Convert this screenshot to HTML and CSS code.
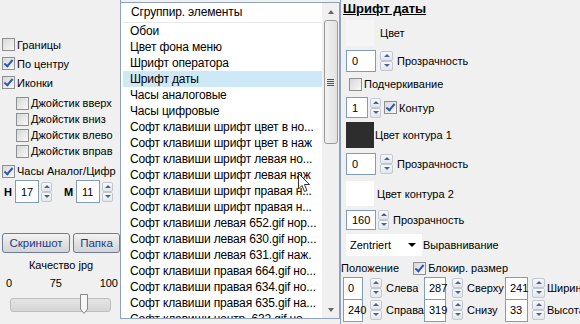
FILE: index.html
```html
<!DOCTYPE html>
<html lang="ru">
<head>
    <meta charset="UTF-8">
    <title>Настройки</title>
    <link rel="stylesheet" href="styles.css">
</head>
<body>
<div class="app">
    <div class="left">
        <div class="row big"><span class="cb"></span>Границы</div>
        <div class="row big"><span class="cb on"></span>По центру</div>
        <div class="row big"><span class="cb on"></span>Иконки</div>
        <div class="sub">
            <div class="row"><span class="cb"></span>Джойстик вверх</div>
            <div class="row"><span class="cb"></span>Джойстик вниз</div>
            <div class="row"><span class="cb"></span>Джойстик влево</div>
            <div class="row"><span class="cb"></span>Джойстик вправ</div>
        </div>
        <div class="row clock"><span class="cb on"></span>Часы Аналог/Цифр</div>
        <div class="hm">
            <b class="hm-h">H</b>
            <span class="num w24">17</span>
            <span class="spin"><i class="up"></i><i class="dn"></i></span>
            <b class="hm-m">M</b>
            <span class="num w24">11</span>
            <span class="spin"><i class="up"></i><i class="dn"></i></span>
        </div>
        <div class="btns">
            <button class="btn shot">Скриншот</button>
            <button class="btn folder">Папка</button>
        </div>
        <div class="quality">Качество jpg</div>
        <div class="scale"><span>0</span><span>75</span><span>100</span></div>
        <div class="slider">
            <div class="track"></div>
            <svg class="thumb" width="10" height="22" viewBox="0 0 10 22">
                <path d="M1.5 1.5 H8.5 V16 L5 20.5 L1.5 16 Z" fill="#f7f7f7" stroke="#8a8a8a"/>
            </svg>
        </div>
    </div>

    <div class="list">
        <div class="list-body">
            <div class="list-head">Сгруппир. элементы</div>
            <div class="item">Обои</div>
            <div class="item">Цвет фона меню</div>
            <div class="item">Шрифт оператора</div>
            <div class="item sel">Шрифт даты</div>
            <div class="item">Часы аналоговые</div>
            <div class="item">Часы цифровые</div>
            <div class="item">Софт клавиши шрифт цвет в но...</div>
            <div class="item">Софт клавиши шрифт цвет в наж</div>
            <div class="item">Софт клавиши шрифт левая но...</div>
            <div class="item">Софт клавиши шрифт левая наж</div>
            <div class="item">Софт клавиши шрифт правая н...</div>
            <div class="item">Софт клавиши шрифт правая н...</div>
            <div class="item">Софт клавиши левая 652.gif нор...</div>
            <div class="item">Софт клавиши левая 630.gif нор...</div>
            <div class="item">Софт клавиши левая 631.gif наж.</div>
            <div class="item">Софт клавиши правая 664.gif но...</div>
            <div class="item">Софт клавиши правая 634.gif но...</div>
            <div class="item">Софт клавиши правая 635.gif на...</div>
            <div class="item">Софт клавиши центр. 632.gif но...</div>
        </div>
        <div class="vscroll">
            <span class="arr-up"></span>
            <div class="vthumb"><span class="grip"></span></div>
            <span class="arr-dn"></span>
        </div>
        <svg class="cursor" width="13" height="20" viewBox="0 0 13 20">
            <path d="M0.5 0.5 V16 L4 12.5 L6.5 18.5 L9 17.5 L6.5 11.5 H11.5 Z" fill="#fff" stroke="#333" stroke-width="1"/>
        </svg>
    </div>

    <div class="right">
        <div class="title">Шрифт даты</div>
        <div class="line r-color"><span class="swatch light"></span><span class="lbl-color">Цвет</span></div>
        <div class="line r-spin1">
            <span class="num w30">0</span>
            <span class="spin tall"><i class="up"></i><i class="dn"></i></span>
            <span class="lbl">Прозрачность</span>
        </div>
        <div class="line r-under"><span class="cb"></span>Подчеркивание</div>
        <div class="line r-contour">
            <span class="num w22">1</span>
            <span class="spin"><i class="up"></i><i class="dn"></i></span>
            <span class="cb on"></span>Контур
        </div>
        <div class="line r-color2"><span class="swatch dark"></span><span class="lbl-c1">Цвет контура 1</span></div>
        <div class="line r-spin2">
            <span class="num w30">0</span>
            <span class="spin tall"><i class="up"></i><i class="dn"></i></span>
            <span class="lbl">Прозрачность</span>
        </div>
        <div class="line r-color3"><span class="swatch white"></span><span class="lbl-c2">Цвет контура 2</span></div>
        <div class="line r-spin3">
            <span class="num w30">160</span>
            <span class="spin"><i class="up"></i><i class="dn"></i></span>
            <span class="lbl">Прозрачность</span>
        </div>
        <div class="line r-align">
            <span class="combo">Zentriert<span class="caret"></span></span>
            <span>Выравнивание</span>
        </div>
        <div class="line r-pos">
            <span class="pos-lbl">Положение</span>
            <span class="cb on"></span>Блокир. размер
        </div>
        <div class="grid">
            <span class="num g">0</span><span class="spin s1"><i class="up"></i><i class="dn"></i></span><span class="g-lbl">Слева</span>
            <span class="num g">287</span><span class="spin s2"><i class="up"></i><i class="dn"></i></span><span class="g-lbl">Сверху</span>
            <span class="num g">241</span><span class="spin s3"><i class="up"></i><i class="dn"></i></span><span class="g-lbl">Ширина</span>
            <span class="num g">240</span><span class="spin s1"><i class="up"></i><i class="dn"></i></span><span class="g-lbl">Справа</span>
            <span class="num g">319</span><span class="spin s2"><i class="up"></i><i class="dn"></i></span><span class="g-lbl">Снизу</span>
            <span class="num g">33</span><span class="spin s3"><i class="up"></i><i class="dn"></i></span><span class="g-lbl">Высота</span>
        </div>
    </div>
</div>
</body>
</html>
```

FILE: styles.css
```css
body {
    margin: 0;
    background-color: #f0f0f0;
    font-family: "Liberation Sans", Arial, sans-serif;
    font-size: 11px;
    color: #000;
    overflow: hidden;
}
.app {
    display: flex;
    width: 580px;
    height: 324px;
}

/* left column */
.left {
    width: 121px;
    flex: none;
    padding-top: 35px;
    box-sizing: border-box;
    border-right: 1px solid #8fa3bf;
    height: 319px;
}
.row {
    display: flex;
    align-items: center;
    height: 16px;
    padding-left: 2px;
    white-space: nowrap;
}
.row.big {
    height: 19px;
}
.sub {
    margin-top: 3px;
    padding-left: 14px;
}
.row.clock {
    margin-top: 4px;
}
.cb {
    width: 11px;
    height: 11px;
    border: 1px solid #8e8f8f;
    background: linear-gradient(135deg, #d8d8d8, #f8f8f8);
    margin-right: 2px;
    flex: none;
    position: relative;
}
.cb.on::after {
    content: "";
    position: absolute;
    left: 3px;
    top: 0px;
    width: 3px;
    height: 7px;
    border: solid #2b58b8;
    border-width: 0 2px 2px 0;
    transform: rotate(40deg);
}

.hm {
    display: flex;
    align-items: center;
    height: 23px;
    margin-top: 1px;
}
.hm-h {
    margin-left: 4px;
    width: 11px;
}
.hm-m {
    margin-left: 12px;
    width: 12px;
}
.num {
    display: flex;
    align-items: center;
    box-sizing: border-box;
    height: 22px;
    border: 1px solid #7f9db9;
    background: #fff;
    padding-left: 5px;
    flex: none;
}
.w24 {
    width: 24px;
    height: 23px;
}
.w22 {
    width: 22px;
    height: 21px;
}
.w30 {
    width: 30px;
}
.spin {
    display: flex;
    flex-direction: column;
    width: 11px;
    height: 20px;
    margin-left: 2px;
    flex: none;
}
.spin.tall {
    width: 13px;
    margin-left: 4px;
}
.spin i {
    flex: 1;
    border: 1px solid #c2c8d2;
    border-radius: 2px;
    background: linear-gradient(#fafafa, #e2e5ea);
    position: relative;
}
.spin i::after {
    content: "";
    position: absolute;
    left: 50%;
    top: 50%;
    margin: -2px 0 0 -3px;
    border-left: 3px solid transparent;
    border-right: 3px solid transparent;
}
.spin .up::after {
    border-bottom: 3px solid #4b6391;
}
.spin .dn::after {
    border-top: 3px solid #4b6391;
}

.btns {
    display: flex;
    gap: 3px;
    margin-top: 30px;
    padding-left: 2px;
}
.btn {
    height: 20px;
    border: 1px solid #707c92;
    border-radius: 3px;
    background: linear-gradient(#f4f4f4, #e0e0e0 55%, #d4d4d4);
    font: inherit;
    font-size: 11.5px;
    color: #1b3a8a;
    padding: 0;
}
.shot {
    width: 68px;
}
.folder {
    width: 47px;
}
.quality {
    text-align: center;
    margin-top: 4px;
    line-height: 16px;
    padding-left: 2px;
}
.scale {
    display: flex;
    justify-content: space-between;
    margin-top: 2px;
    line-height: 16px;
    padding: 0 2px 0 6px;
}
.slider {
    position: relative;
    height: 22px;
    margin: 2px 0 0 10px;
    width: 101px;
}
.track {
    position: absolute;
    left: 0;
    right: 0;
    top: 5px;
    height: 14px;
    box-sizing: border-box;
    border: 1px solid #bdbdbd;
    border-radius: 3px;
    background: linear-gradient(#e4e4e4, #d6d6d6);
}
.thumb {
    position: absolute;
    left: 69px;
    top: 0;
}

/* list */
.list {
    position: relative;
    width: 219px;
    flex: none;
    height: 317px;
    margin-top: 2px;
    box-sizing: border-box;
    border-top: 1px solid #8fa3bf;
    border-bottom: 1px solid #8fa3bf;
    border-right: 1px solid #8fa3bf;
    background: #fff;
    display: flex;
    overflow: hidden;
    font-size: 12px;
    letter-spacing: -0.15px;
}
.list-body {
    flex: 1;
    padding-left: 2px;
    overflow: hidden;
}
.list-head {
    height: 19px;
    line-height: 19px;
    padding-left: 8px;
    border-bottom: 1px solid #e8e8e8;
}
.item {
    height: 16px;
    line-height: 16px;
    padding-left: 7px;
    white-space: nowrap;
}
.item.sel {
    background: #cde8f7;
}
.vscroll {
    width: 17px;
    flex: none;
    display: flex;
    flex-direction: column;
    align-items: center;
    background: #f0f0f0;
}
.arr-up,
.arr-dn {
    width: 0;
    height: 0;
    border-left: 3.5px solid transparent;
    border-right: 3.5px solid transparent;
}
.arr-up {
    border-bottom: 4px solid #666;
    margin: 7px 0 6px;
}
.arr-dn {
    border-top: 4px solid #666;
    margin: auto 0 6px;
}
.vthumb {
    width: 14px;
    height: 124px;
    box-sizing: border-box;
    border: 1px solid #9a9a9a;
    border-radius: 3px;
    background: linear-gradient(90deg, #f2f2f2, #e2e2e2);
    display: flex;
    align-items: center;
    justify-content: center;
}
.grip {
    width: 7px;
    height: 7px;
    background: repeating-linear-gradient(#555 0 1px, transparent 1px 2px);
}
.cursor {
    position: absolute;
    left: 177px;
    top: 170px;
}

/* right column */
.right {
    flex: 1;
    border-left: 1px solid #8fa3bf;
    padding-left: 5px;
    white-space: nowrap;
    overflow: hidden;
}
.title {
    height: 17px;
    line-height: 17px;
    font-weight: bold;
    font-size: 13px;
    text-decoration: underline;
    margin-left: -3px;
}
.line {
    display: flex;
    align-items: center;
}
.swatch {
    width: 28px;
    flex: none;
}
.swatch.light {
    height: 26px;
    background: #f5f5f5;
}
.swatch.dark {
    height: 26px;
    background: #2d2d2d;
}
.swatch.white {
    height: 25px;
    background: #fff;
}
.r-color {
    margin-top: 3px;
}
.lbl-color {
    margin-left: 6px;
}
.r-spin1 {
    margin-top: 4px;
}
.lbl {
    margin-left: 4px;
}
.r-under {
    margin-top: 5px;
    height: 14px;
    padding-left: 3px;
}
.r-contour {
    margin-top: 6px;
}
.r-contour .cb {
    margin-left: 3px;
}
.r-color2 {
    margin-top: 4px;
}
.lbl-c1 {
    margin-left: 1px;
}
.r-spin2 {
    margin-top: 5px;
}
.r-color3 {
    margin-top: 6px;
}
.lbl-c2 {
    margin-left: 3px;
}
.r-spin3 {
    margin-top: 4px;
}
.r-spin3 .num {
    height: 20px;
}
.r-align {
    margin-top: 4px;
}
.combo {
    display: flex;
    align-items: center;
    justify-content: space-between;
    box-sizing: border-box;
    width: 76px;
    height: 22px;
    background: #fff;
    padding: 0 6px 0 4px;
    margin-right: 1px;
}
.caret {
    border-left: 4px solid transparent;
    border-right: 4px solid transparent;
    border-top: 4px solid #000;
}
.r-pos {
    margin: 5px 0 0 -5px;
    height: 14px;
}
.pos-lbl {
    margin-right: 14px;
}
.grid {
    display: grid;
    grid-template-columns: 20px 21px 40px 22px 19px 40px 23px 17px auto;
    grid-auto-rows: 22px;
    margin: 2px 0 0 -3px;
    align-items: center;
}
.num.g {
    height: 23px;
    padding-left: 4px;
}
.grid .spin.s1 {
    margin-left: 7px;
    width: 12px;
}
.grid .spin.s2 {
    margin-left: 6px;
    width: 11px;
}
.grid .spin.s3 {
    margin-left: 4px;
    width: 13px;
}
.g-lbl {
    padding-left: 2px;
}
```
